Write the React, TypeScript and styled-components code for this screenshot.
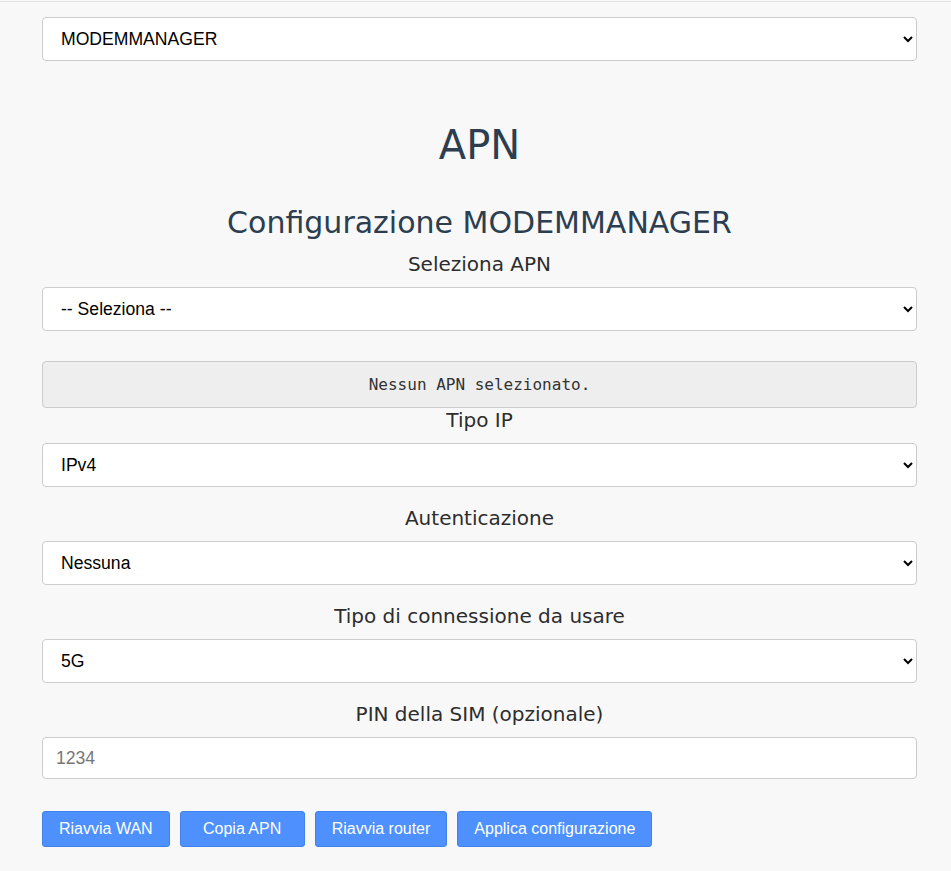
import React from "react";
import styled, { createGlobalStyle } from "styled-components";

const GlobalStyle = createGlobalStyle`
  html, body { margin: 0; padding: 0; background: #f8f8f8; }
  body { font-family: "DejaVu Sans", Verdana, sans-serif; }
`;

const Page = styled.div`
  margin-top: 1px;
  border-top: 1px solid #e4e4e4;
  padding: 15px 34px 24px 42px;
  min-height: 860px;
  box-sizing: border-box;
`;

const Select = styled.select<{ $mb?: number }>`
  display: block;
  width: 100%;
  height: 44px;
  box-sizing: border-box;
  padding: 0 10px 0 14px;
  border: 1px solid #cccccc;
  border-radius: 4px;
  background: #ffffff;
  font-family: "Liberation Sans", Arial, sans-serif;
  font-size: 17.6px;
  color: #000;
  margin: 0 0 ${(p) => p.$mb ?? 19}px 0;
`;

const Input = styled.input`
  display: block;
  width: 100%;
  height: 42px;
  box-sizing: border-box;
  padding: 0 13px;
  border: 1px solid #cccccc;
  border-radius: 4px;
  background: #ffffff;
  font-family: "Liberation Sans", Arial, sans-serif;
  font-size: 17.6px;
  margin: 0 0 32px 0;
  &::placeholder { color: #777; }
`;

const Title = styled.h1`
  margin: 61px 0 0 0;
  text-align: center;
  font-family: "DejaVu Sans", Verdana, sans-serif;
  font-weight: 400;
  font-size: 40px;
  line-height: 46px;
  color: #2c3e50;
`;

const Subtitle = styled.h2`
  margin: 37px 0 0 0;
  text-align: center;
  font-family: "DejaVu Sans", Verdana, sans-serif;
  font-weight: 400;
  font-size: 30px;
  line-height: 36px;
  color: #2c3e50;
`;

const Label = styled.label<{ $mt?: number }>`
  display: block;
  text-align: center;
  font-size: 20px;
  line-height: 25px;
  color: #2d2d2d;
  margin: ${(p) => p.$mt ?? 0}px 0 10px 0;
`;

const Info = styled.div`
  height: 47px;
  box-sizing: border-box;
  margin-top: 30px;
  border: 1px solid #cccccc;
  border-radius: 4px;
  background: #eeeeee;
  display: flex;
  align-items: center;
  justify-content: center;
  font-family: "DejaVu Sans Mono", "Liberation Mono", monospace;
  font-size: 16px;
  color: #333;
`;

const Buttons = styled.div`
  display: flex;
  align-items: center;
  gap: 10px;
`;

const Button = styled.button`
  height: 36px;
  min-width: 125px;
  padding: 0 16px;
  border: 1px solid #3f82ea;
  border-radius: 3px;
  background: #4d90fe;
  color: #ffffff;
  font-family: "Liberation Sans", Arial, sans-serif;
  font-size: 16px;
  cursor: pointer;
`;

export default function App() {
  return (
    <>
      <GlobalStyle />
      <Page>
        <Select $mb={0} defaultValue="mm">
          <option value="mm">MODEMMANAGER</option>
        </Select>
        <Title>APN</Title>
        <Subtitle>Configurazione MODEMMANAGER</Subtitle>
        <Label $mt={11}>Seleziona APN</Label>
        <Select $mb={0} defaultValue="">
          <option value="">-- Seleziona --</option>
        </Select>
        <Info>Nessun APN selezionato.</Info>
        <Label>Tipo IP</Label>
        <Select defaultValue="ipv4">
          <option value="ipv4">IPv4</option>
        </Select>
        <Label>Autenticazione</Label>
        <Select defaultValue="none">
          <option value="none">Nessuna</option>
        </Select>
        <Label>Tipo di connessione da usare</Label>
        <Select defaultValue="5g">
          <option value="5g">5G</option>
        </Select>
        <Label>PIN della SIM (opzionale)</Label>
        <Input placeholder="1234" />
        <Buttons>
          <Button>Riavvia WAN</Button>
          <Button>Copia APN</Button>
          <Button>Riavvia router</Button>
          <Button>Applica configurazione</Button>
        </Buttons>
      </Page>
    </>
  );
}
